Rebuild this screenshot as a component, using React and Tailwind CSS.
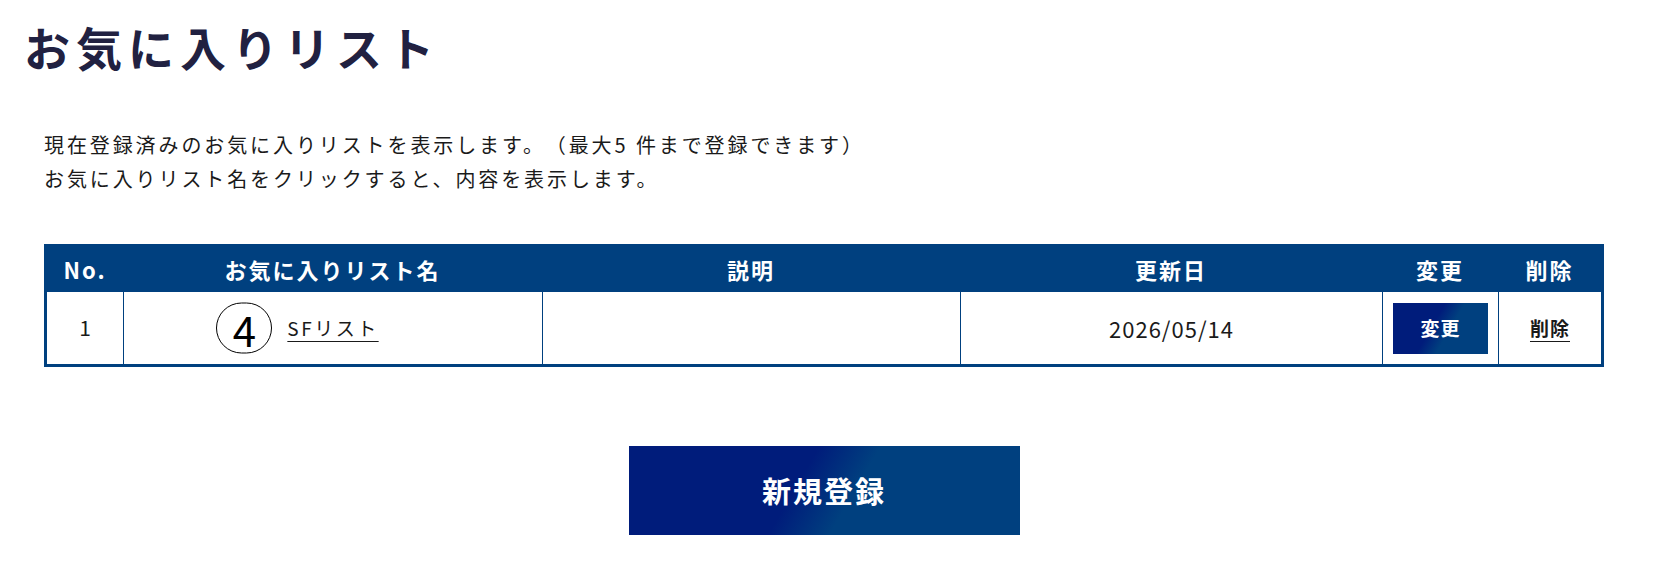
export default function App() {
    const rows = [
        { no: 1, name: "SFリスト", description: "", updated: "2026/05/14" },
    ];

    return (
        <div className="min-h-screen bg-white pt-[23px] pl-[24px] pb-10 font-['Noto_Sans_CJK_JP','Noto_Sans',sans-serif] [text-spacing-trim:space-all]">
            <h1 className="text-[46px] leading-none font-bold tracking-[6px] text-[#212141]">お気に入りリスト</h1>

            <div className="ml-[20px] w-[1560px]">
                <div className="mt-[59px] text-[20px] leading-[34px] tracking-[2.9px] text-[#1a1a1a]">
                    <p>現在登録済みのお気に入りリストを表示します。（最大5 件まで登録できます）</p>
                    <p>お気に入りリスト名をクリックすると、内容を表示します。</p>
                </div>

                <div className="mt-[48px] border-[3px] border-[#00407f]">
                    <div className="grid grid-cols-[76px_419px_418px_422px_116px_1fr] h-[45px] bg-[#00407f] text-white text-[22px] font-bold tracking-[2px]">
                        <div className="flex items-center justify-center">No.</div>
                        <div className="flex items-center justify-center">お気に入りリスト名</div>
                        <div className="flex items-center justify-center">説明</div>
                        <div className="flex items-center justify-center">更新日</div>
                        <div className="flex items-center justify-center">変更</div>
                        <div className="flex items-center justify-center">削除</div>
                    </div>
                    {rows.map((row) => (
                        <div key={row.no} className="grid grid-cols-[76px_419px_418px_422px_116px_1fr] h-[72px] text-[#1a1a1a]">
                            <div className="flex items-center justify-center text-[21px]">{row.no}</div>
                            <div className="flex items-center justify-center border-l border-[#00407f]">
                                <div className="relative">
                                    <span className="absolute right-full top-1/2 -translate-y-1/2 mr-[15px] flex h-[51px] w-[56px] items-center justify-center rounded-full border-[1.5px] border-black text-[42px] font-normal leading-none text-black">4</span>
                                    <a href="#" className="text-[19px] tracking-[2.5px] underline underline-offset-[5px]">{row.name}</a>
                                </div>
                            </div>
                            <div className="flex items-center justify-center border-l border-[#00407f]">{row.description}</div>
                            <div className="flex items-center justify-center border-l border-[#00407f] text-[22px] tracking-[1px]">{row.updated}</div>
                            <div className="flex items-center justify-center border-l border-[#00407f]">
                                <button className="h-[51px] w-[95px] bg-[linear-gradient(120deg,#001c7b_42%,#00407f_58%)] text-[19px] font-bold tracking-[1px] text-white">変更</button>
                            </div>
                            <div className="flex items-center justify-center border-l border-[#00407f]">
                                <a href="#" className="text-[19px] font-bold tracking-[1px] underline underline-offset-[5px]">削除</a>
                            </div>
                        </div>
                    ))}
                </div>

                <div className="mt-[79px] flex justify-center">
                    <button className="h-[89px] w-[391px] bg-[linear-gradient(120deg,#001c7b_43%,#00407f_57%)] text-[29px] font-bold tracking-[2px] text-white">新規登録</button>
                </div>
            </div>
        </div>
    );
}
